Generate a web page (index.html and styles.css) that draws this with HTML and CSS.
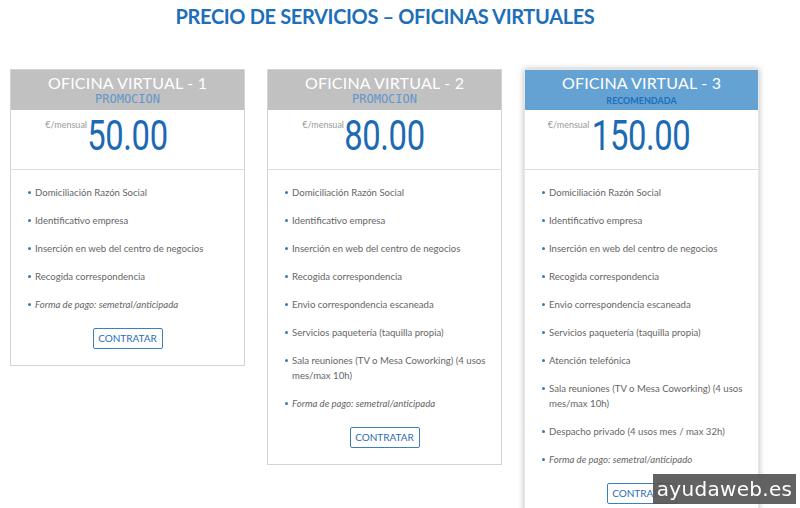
FILE: index.html
```html
<!DOCTYPE html>
<html lang="es">
<head>
<meta charset="utf-8">
<title>Precio de servicios</title>
<link rel="stylesheet" href="styles.css">
</head>
<body>
<main class="page">
  <h1 class="title">PRECIO DE SERVICIOS – OFICINAS VIRTUALES</h1>
  <div class="cards">
    <section class="card">
      <header class="card-head">
        <div class="card-name">OFICINA VIRTUAL - 1</div>
        <div class="card-tag">PROMOCION</div>
      </header>
      <div class="price"><span class="amount"><span class="unit">€/mensual</span><span class="num">50.00</span></span></div>
      <ul class="features">
        <li>Domiciliación Razón Social</li>
        <li>Identificativo empresa</li>
        <li>Inserción en web del centro de negocios</li>
        <li>Recogida correspondencia</li>
        <li class="em">Forma de pago: semetral/anticipada</li>
      </ul>
      <div class="action"><a class="btn">CONTRATAR</a></div>
    </section>
    <section class="card">
      <header class="card-head">
        <div class="card-name">OFICINA VIRTUAL - 2</div>
        <div class="card-tag">PROMOCION</div>
      </header>
      <div class="price"><span class="amount"><span class="unit">€/mensual</span><span class="num">80.00</span></span></div>
      <ul class="features">
        <li>Domiciliación Razón Social</li>
        <li>Identificativo empresa</li>
        <li>Inserción en web del centro de negocios</li>
        <li>Recogida correspondencia</li>
        <li>Envio correspondencia escaneada</li>
        <li>Servicios paquetería (taquilla propia)</li>
        <li>Sala reuniones (TV o Mesa Coworking) (4 usos mes/max 10h)</li>
        <li class="em">Forma de pago: semetral/anticipada</li>
      </ul>
      <div class="action"><a class="btn">CONTRATAR</a></div>
    </section>
    <section class="card featured">
      <header class="card-head">
        <div class="card-name">OFICINA VIRTUAL - 3</div>
        <div class="card-tag">RECOMENDADA</div>
      </header>
      <div class="price"><span class="amount"><span class="unit">€/mensual</span><span class="num">150.00</span></span></div>
      <ul class="features">
        <li>Domiciliación Razón Social</li>
        <li>Identificativo empresa</li>
        <li>Inserción en web del centro de negocios</li>
        <li>Recogida correspondencia</li>
        <li>Envio correspondencia escaneada</li>
        <li>Servicios paquetería (taquilla propia)</li>
        <li>Atención telefónica</li>
        <li>Sala reuniones (TV o Mesa Coworking) (4 usos mes/max 10h)</li>
        <li>Despacho privado (4 usos mes / max 32h)</li>
        <li class="em">Forma de pago: semetral/anticipado</li>
      </ul>
      <div class="action"><a class="btn">CONTRATAR</a></div>
    </section>
  </div>
</main>
<div class="watermark">ayudaweb.es</div>
</body>
</html>
```
FILE: styles.css
```css
html, body {
  margin: 0;
  padding: 0;
  background: #fff;
  overflow: hidden;
  height: 508px;
}
body {
  font-family: Lato, "Open Sans", sans-serif;
  color: #555;
}
.page {
  width: 750px;
  padding: 0 10px;
}
.title {
  margin: 4px 0 0;
  height: 65px;
  text-align: center;
  font-size: 20px;
  line-height: 24px;
  font-weight: 700;
  color: #1e6fb8;
  letter-spacing: -0.35px;
}
.cards {
  display: flex;
  gap: 22px;
  align-items: flex-start;
}
.card {
  width: 233px;
  border: 1px solid #d4d4d4;
  background: #fff;
}
.card.featured {
  border-color: #e6e6e6;
  box-shadow: 0 0 6px rgba(0, 0, 0, 0.28);
}
.card-head {
  height: 40px;
  background: #c1c1c1;
  text-align: center;
  color: #fff;
}
.featured .card-head {
  background: #64a2d3;
}
.card-name {
  padding-top: 4px;
  font-size: 16px;
  line-height: 18px;
  letter-spacing: 0.2px;
}
.card-tag {
  font-family: "DejaVu Sans Mono", monospace;
  font-size: 12px;
  line-height: 15px;
  color: #6396c9;
}
.featured .card-tag {
  font-family: Lato, sans-serif;
  font-size: 9px;
  line-height: 15px;
  font-weight: 700;
  color: #1e6fb8;
  padding-top: 1px;
}
.price {
  height: 59px;
  border-bottom: 1px solid #dcdcdc;
  text-align: center;
}
.amount {
  position: relative;
  display: inline-block;
}
.num {
  display: inline-block;
  font-family: Roboto, sans-serif;
  font-size: 42px;
  line-height: 52px;
  color: #1b6ab3;
  transform: scaleX(0.78);
  letter-spacing: -0.5px;
  margin: 0 -12px;
}
.unit {
  position: absolute;
  right: 100%;
  top: 9px;
  margin-right: 1px;
  font-size: 9px;
  color: #9a9a9a;
  white-space: nowrap;
}
.features {
  list-style: none;
  margin: 0;
  padding: 15px 10px 0 24px;
}
.features li {
  position: relative;
  font-size: 9.6px;
  line-height: 15px;
  margin-bottom: 13px;
  color: #666;
}
.features li::before {
  content: "";
  position: absolute;
  left: -7px;
  top: 6px;
  width: 3px;
  height: 3px;
  border-radius: 50%;
  background: #3c78b4;
}
.features li.em {
  font-style: italic;
}
.action {
  text-align: center;
  padding: 1px 0 16px;
}
.btn {
  display: inline-block;
  box-sizing: border-box;
  width: 70px;
  height: 21px;
  line-height: 19px;
  border: 1px solid #3c7fc1;
  border-radius: 2px;
  font-size: 10px;
  color: #2a6db0;
}
.watermark {
  position: fixed;
  left: 653px;
  top: 474px;
  width: 143px;
  height: 30px;
  background: rgba(85, 85, 85, 0.92);
  color: #fff;
  font-family: "DejaVu Sans", sans-serif;
  font-size: 20px;
  line-height: 30px;
  text-align: center;
  letter-spacing: 0.3px;
}
```
